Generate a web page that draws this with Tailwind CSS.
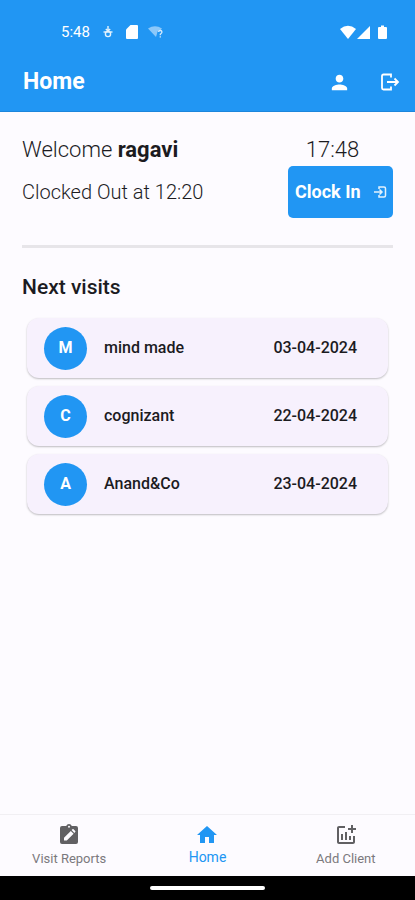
<!DOCTYPE html>
<html lang="en">
<head>
<meta charset="utf-8">
<meta name="viewport" content="width=device-width, initial-scale=1">
<title>Home</title>
<script src="https://cdn.jsdelivr.net/npm/@tailwindcss/browser@4"></script>
</head>
<body class="flex min-h-screen flex-col bg-[#fdfbff] font-[Roboto,sans-serif] text-[#1c1b1f]">
<header class="border-b border-[#1c86dc] bg-[#2196f3] pt-5 text-white">
  <div class="flex h-6 items-center justify-between pr-7 pl-[61px]">
    <div class="flex items-center">
      <span class="w-[41px] text-[15px]">5:48</span>
      <svg class="mr-3 size-3" viewBox="0 0 12 12" fill="none" stroke="#e3f2fd" stroke-width="1.400" aria-hidden="true"><path d="M6 0v5M3.800 3L6 5l2.200-2"/><path d="M1.500 6h9"/><circle cx="6" cy="8" r="2.600"/></svg>
      <svg class="mr-2.5 h-[14px] w-3" viewBox="0 0 12 14" fill="#fff" aria-hidden="true"><path d="M4.500 0H11q1 0 1 1v12q0 1-1 1H1q-1 0-1-1V4.500z"/></svg>
      <svg class="h-3 w-4" viewBox="0 0 16 12" aria-hidden="true"><path d="M0 2.500Q7 -2 14 2.500L12.500 4.200Q9.500 4 9.200 7L8 11z" fill="#8cc8f9"/><path d="M10.500 6q.2-1.500 1.800-1.500t1.700 1.600q0 .9-1.700 2.100v1M12.300 10.200v1.400" fill="none" stroke="#d5ebfd" stroke-width="1.300"/></svg>
    </div>
    <svg class="h-[15px] w-[48px]" viewBox="0 0 48 15" fill="#fff" aria-hidden="true"><path d="M1 4Q9-2.500 17 4L9 14z"/><path d="M31 1v13H18z"/><path d="M40 2h2V.5h3V2h2q1 0 1 1v10q0 1-1 1h-7q-1 0-1-1V3q0-1 1-1z"/></svg>
  </div>
  <div class="flex h-[67px] items-center justify-between pt-[9px] pr-[14px] pl-[23px]">
    <h1 class="text-[23px] font-bold">Home</h1>
    <div class="flex items-center gap-[28px]">
      <button type="button" aria-label="Profile"><svg class="size-[23px]" viewBox="0 0 24 24" fill="#fff"><path d="M12 12c2.210 0 4-1.790 4-4s-1.790-4-4-4-4 1.790-4 4 1.790 4 4 4zm0 2c-2.670 0-8 1.340-8 4v2h16v-2c0-2.660-5.330-4-8-4z"/></svg></button>
      <button type="button" aria-label="Log out"><svg class="size-[22px]" viewBox="0 0 22 22" fill="none" stroke="#fff" stroke-width="1.800"><path d="M12 6.500V3.500H4.500q-1.500 0-1.500 1.500v12q0 1.500 1.500 1.500H12v-3M8 11h11M15.500 7.500L19 11l-3.500 3.500"/></svg></button>
    </div>
  </div>
</header>

<main class="flex-1 px-[22px] pt-6">
  <section class="flex justify-between border-b-[3px] border-[#e7e5e9] pb-[27px]">
    <div>
      <p class="text-[22px] leading-7 font-light">Welcome <strong class="font-bold">ragavi</strong></p>
      <p class="mt-4 text-[20px] leading-6 font-light">Clocked Out at 12:20</p>
    </div>
    <div class="flex flex-col items-center">
      <time class="mr-4 text-[22px] leading-7 font-light">17:48</time>
      <button type="button" class="mt-0.5 flex h-[52px] w-[105px] items-center justify-between rounded-[5px] bg-[#2196f3] pr-1.5 pl-[7px] text-lg font-bold text-white">Clock In
        <svg class="size-[14px]" viewBox="0 0 14 14" fill="none" stroke="#e3f2fd" stroke-width="1.500" aria-hidden="true"><path d="M6 4V2h5q1.500 0 1.500 1.500v7q0 1.500-1.500 1.500H6v-2M1 7h8M6.500 4.500L9 7 6.500 9.500"/></svg>
      </button>
    </div>
  </section>
  <h2 class="mt-[25px] text-[21px] leading-7 font-medium">Next visits</h2>
  <ul class="mx-[5px] mt-[17px] flex flex-col gap-2 text-base font-medium">
    <li class="flex h-[60px] items-center rounded-xl bg-[#f7f1fd] pr-[31px] pl-[17px] shadow-[0_1px_2px_rgba(0,0,0,0.25)]"><span class="mr-[17px] flex size-[43px] items-center justify-center rounded-full bg-[#2196f3] text-base font-bold text-white">M</span><span class="flex-1">mind made</span><time datetime="2024-04-03">03-04-2024</time></li>
    <li class="flex h-[60px] items-center rounded-xl bg-[#f7f1fd] pr-[31px] pl-[17px] shadow-[0_1px_2px_rgba(0,0,0,0.25)]"><span class="mr-[17px] flex size-[43px] items-center justify-center rounded-full bg-[#2196f3] text-base font-bold text-white">C</span><span class="flex-1">cognizant</span><time datetime="2024-04-22">22-04-2024</time></li>
    <li class="flex h-[60px] items-center rounded-xl bg-[#f7f1fd] pr-[31px] pl-[17px] shadow-[0_1px_2px_rgba(0,0,0,0.25)]"><span class="mr-[17px] flex size-[43px] items-center justify-center rounded-full bg-[#2196f3] text-base font-bold text-white">A</span><span class="flex-1">Anand&amp;Co</span><time datetime="2024-04-23">23-04-2024</time></li>
  </ul>
</main>

<nav class="grid h-[62px] grid-cols-3 border-t border-[#f1eff3] pt-2 text-[13px] leading-5 text-[#7b797d]" aria-label="Main">
  <a href="#reports" class="flex flex-col items-center gap-0.5"><svg class="size-6" viewBox="0 0 24 24"><path d="M5 3h4.200a3 3 0 0 1 5.600 0H19q2 0 2 2v14q0 2-2 2H5q-2 0-2-2V5q0-2 2-2z" fill="#616063"/><circle cx="12" cy="3.800" r="1" fill="#fdfbff"/><path d="M7 17.500v-2.800l6.800-6.800 2.800 2.800-6.800 6.800zM14.600 7.100l.8-.8q.6-.6 1.200 0l1.600 1.600q.6.600 0 1.200l-.8.800z" fill="#fdfbff"/></svg>Visit Reports</a>
  <a href="#home" class="flex flex-col items-center text-sm text-[#2196f3]" aria-current="page"><svg class="size-6" viewBox="0 0 24 24" fill="#2196f3"><path d="M10 20v-6h4v6h5v-8h3L12 3 2 12h3v8z"/></svg>Home</a>
  <a href="#add-client" class="flex flex-col items-center gap-0.5"><svg class="size-6" viewBox="0 0 24 24" fill="#616063"><path d="M22 5v2h-3v3h-2V7h-3V5h3V2h2v3h3zm-3 14H5V5h6V3H5c-1.100 0-2 .9-2 2v14c0 1.100.9 2 2 2h14c1.100 0 2-.9 2-2v-6h-2v6zm-4-6v4h2v-4h-2zm-4 4h2V9h-2v8zm-2 0v-6H7v6h2z"/></svg>Add Client</a>
</nav>
<footer class="flex h-6 items-center justify-center bg-black"><div class="h-1 w-[115px] rounded-full bg-white"></div></footer>
</body>
</html>
